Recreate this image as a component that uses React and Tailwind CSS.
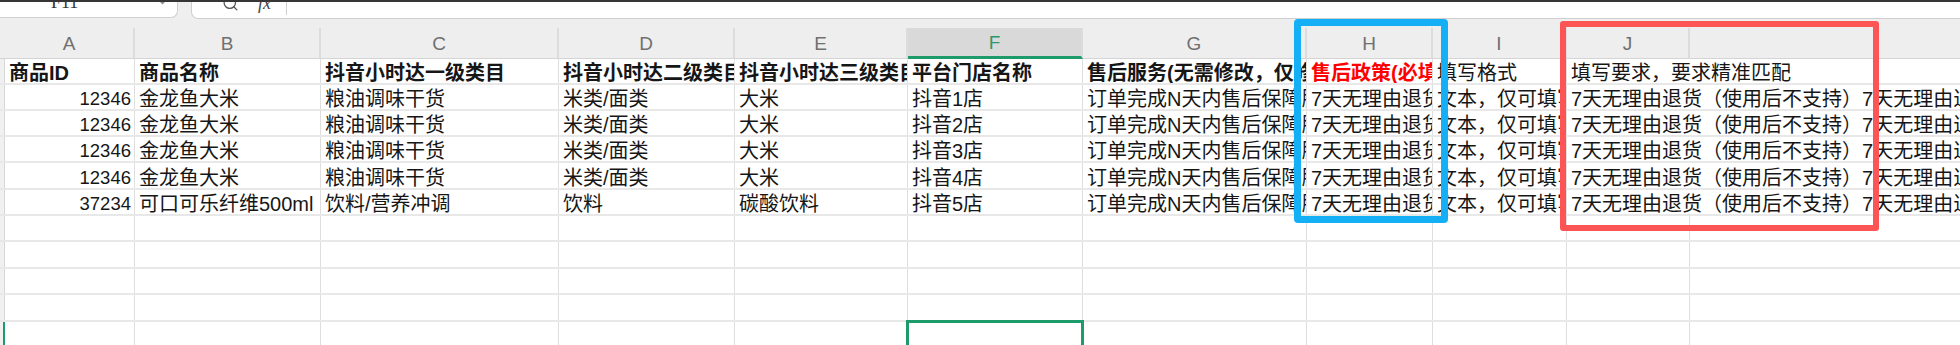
import React from "react";
import { Search } from "lucide-react";

const cols = [
  { k: "A", w: "w-[130px]" },
  { k: "B", w: "w-[186px]" },
  { k: "C", w: "w-[238px]" },
  { k: "D", w: "w-[176px]" },
  { k: "E", w: "w-[173px]" },
  { k: "F", w: "w-[175px]", sel: true },
  { k: "G", w: "w-[224px]" },
  { k: "H", w: "w-[126px]" },
  { k: "I", w: "w-[134px]" },
  { k: "J", w: "w-[123px]" },
];

const J_TEXT = "7天无理由退货（使用后不支持）7天无理由退货（使用后不支持）7天无理由退货（使用后不支持）";

const header = {
  h: "h-[26px]",
  cells: [
    { t: "商品ID", b: true },
    { t: "商品名称", b: true },
    { t: "抖音小时达一级类目", b: true },
    { t: "抖音小时达二级类目", b: true },
    { t: "抖音小时达三级类目", b: true },
    { t: "平台门店名称", b: true },
    { t: "售后服务(无需修改，仅修改售后政策)", b: true },
    { t: "售后政策(必填)", b: true, red: true },
    { t: "填写格式" },
    { t: "填写要求，要求精准匹配" },
  ],
};

const mk = (id, name, c1, c2, c3, shop, h) => ({
  h,
  cells: [
    { t: id, num: true },
    { t: name },
    { t: c1 },
    { t: c2 },
    { t: c3 },
    { t: shop },
    { t: "订单完成N天内售后保障服务" },
    { t: "7天无理由退货（使用后不支持）" },
    { t: "文本，仅可填写固定选项" },
    { t: J_TEXT },
  ],
});

const rows = [
  header,
  mk("12346", "金龙鱼大米", "粮油调味干货", "米类/面类", "大米", "抖音1店", "h-[26px]"),
  mk("12346", "金龙鱼大米", "粮油调味干货", "米类/面类", "大米", "抖音2店", "h-[26px]"),
  mk("12346", "金龙鱼大米", "粮油调味干货", "米类/面类", "大米", "抖音3店", "h-[26px]"),
  mk("12346", "金龙鱼大米", "粮油调味干货", "米类/面类", "大米", "抖音4店", "h-[27px]"),
  mk("37234", "可口可乐纤维500ml", "饮料/营养冲调", "饮料", "碳酸饮料", "抖音5店", "h-[26px]"),
  { h: "h-[26px]", cells: [] },
  { h: "h-[27px]", cells: [] },
  { h: "h-[26px]", cells: [] },
  { h: "h-[27px]", cells: [] },
  { h: "h-[30px]", cells: [], sel: true },
];

function Row({ row }) {
  const hasJ = row.cells[9] && row.cells[9].t;
  return (
    <div className={`${row.h} flex border-b-2 border-[#e8e8e8]`}>
      <div
        className={`w-[5px] shrink-0 bg-[#f0f0f0] ${
          row.sel ? "border-r-2 border-[#1d9b6b]" : "border-r border-[#d6d6d6]"
        }`}
      />
      {cols.map((c, i) => {
        const cell = row.cells[i] || {};
        const isJ = i === 9;
        const width = isJ && hasJ ? "flex-1" : c.w;
        return (
          <div
            key={c.k}
            className={`${width} shrink-0 overflow-hidden whitespace-nowrap flex items-center pt-[4px] leading-[20px] ${
              isJ && hasJ ? "" : "border-r border-[#dedede]"
            } ${cell.num ? "justify-end pr-[3px] text-[18.5px]" : "pl-[4px]"} ${
              cell.b ? "font-bold" : "font-normal"
            } ${cell.red ? "text-[#ff0000]" : "text-[#161616]"}`}
          >
            {cell.t || ""}
          </div>
        );
      })}
      {!hasJ && <div className="flex-1" />}
    </div>
  );
}

export default function App() {
  return (
    <div
      className="relative w-[1960px] h-[345px] overflow-hidden bg-white text-[20px]"
      style={{ fontFamily: '"Liberation Sans", "Noto Sans CJK SC", sans-serif' }}
    >
      {/* dark top strip */}
      <div className="h-[2px] bg-[#363636]" />

      {/* formula bar */}
      <div className="h-[18px] flex items-start bg-[#efefef]">
        <div className="w-[178px] h-[16px] shrink-0 bg-white border-r border-b border-[#cfcfcf] rounded-br-[7px] overflow-hidden">
          <div className="h-[30px] -mt-[15px] flex items-center">
            <span
              className="ml-[51px] text-[18px] text-[#333]"
              style={{ fontFamily: '"Liberation Serif", serif' }}
            >
              F11
            </span>
            <svg className="ml-auto mr-[10px]" width="9" height="6" viewBox="0 0 9 6">
              <path d="M1 1 L4.5 4.5 L8 1" fill="none" stroke="#888" strokeWidth="1.3" />
            </svg>
          </div>
        </div>
        <div className="w-[13px] shrink-0" />
        <div className="flex-1 h-[17px] bg-white border-l border-b border-[#cfcfcf] rounded-bl-[7px] overflow-hidden">
          <div className="h-[30px] -mt-[14px] flex items-center">
            <Search className="ml-[30px] text-[#555]" size={17} strokeWidth={1.8} />
            <span
              className="ml-[19px] italic text-[18px] text-[#444]"
              style={{ fontFamily: '"Liberation Serif", serif' }}
            >
              fx
            </span>
            <div className="ml-[15px] w-px h-[24px] bg-[#d0d0d0]" />
          </div>
        </div>
      </div>

      {/* gap band */}
      <div className="h-[8px] bg-[#eeeeee]" />

      {/* column header */}
      <div className="h-[31px] flex bg-[#eeeeee]">
        <div className="w-[5px] shrink-0 border-b border-[#d4d4d4]" />
        {cols.map((c) => (
          <div
            key={c.k}
            className={`${c.w} shrink-0 flex items-center justify-center border-r-2 border-[#dcdcdc] ${
              c.sel
                ? "bg-[#d9d9d9] border-b-[3px] border-b-[#1d9b6b] text-[#2a9a6c]"
                : "border-b border-b-[#d4d4d4] text-[#707070]"
            } text-[19px] pt-[2px]`}
          >
            {c.k}
          </div>
        ))}
        <div className="flex-1 border-b border-[#d4d4d4]" />
      </div>

      {/* rows */}
      {rows.map((r, i) => (
        <Row key={i} row={r} />
      ))}

      {/* selection box F11 */}
      <div className="absolute left-[906px] top-[320px] w-[178px] h-[40px] border-[3px] border-[#1d9b6b] shadow-[inset_0_0_0_1px_white]" />

      {/* annotation boxes */}
      <div className="absolute left-[1294px] top-[19px] w-[154px] h-[204px] border-[7px] border-[#14aff5] rounded-[4px]" />
      <div className="absolute left-[1560px] top-[21px] w-[319px] h-[210px] border-[6px] border-[#fd5555] rounded-[3px]" />
    </div>
  );
}
